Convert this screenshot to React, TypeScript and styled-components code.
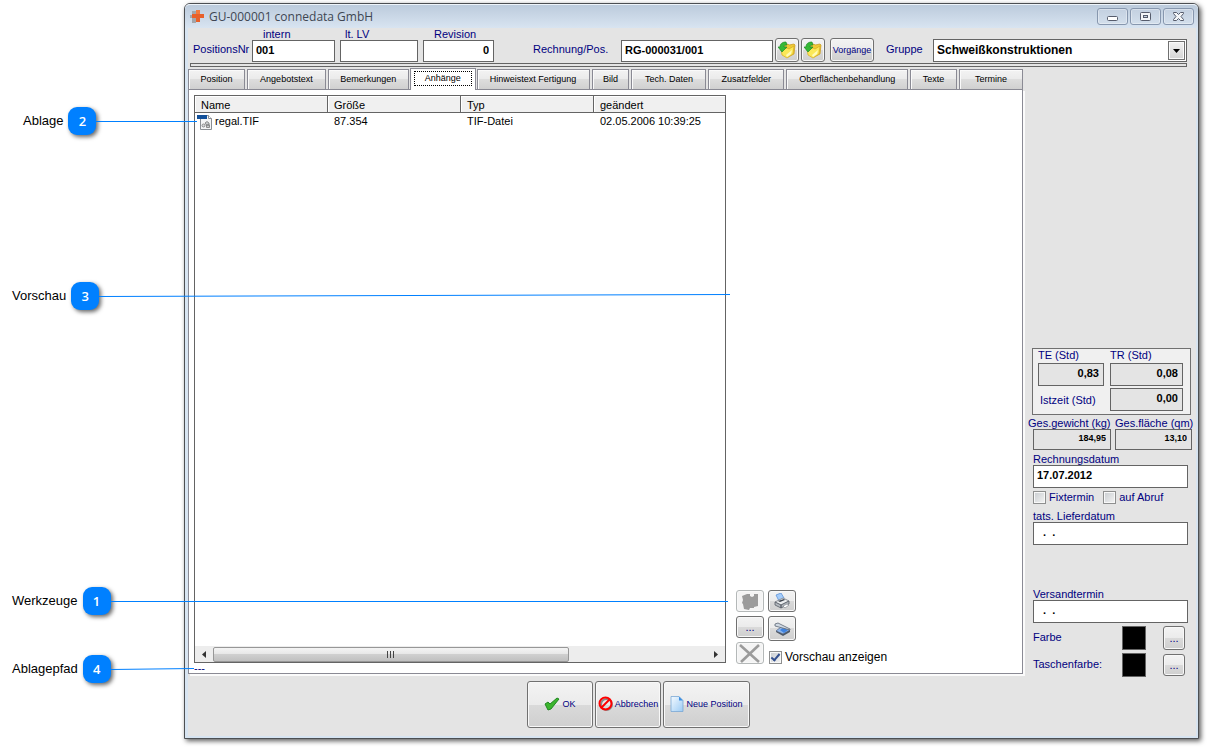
import React from 'react';
import styled, { createGlobalStyle, css } from 'styled-components';

const NAVY = '#000080';
const EDGE = '#646464';
const ACCENT = '#0080ff';

const GlobalStyle = createGlobalStyle`
  *, *::before, *::after { box-sizing: border-box; }
  body {
    margin: 0;
    background: #fff;
    color: #000;
    font-family: "Liberation Sans", Arial, sans-serif;
    font-size: 11px;
  }
  button, input, select { font-family: inherit; margin: 0; }
`;

/* ---------- page and window frame ---------- */

const Page = styled.div`
  position: relative;
  display: flex;
  min-height: 100vh;
  padding: 3px 8px 8px 184px;
`;

const Window = styled.main`
  flex: 1;
  min-width: 0;
  display: flex;
  flex-direction: column;
  border: 1px solid #4c4f52;
  border-radius: 6px 6px 0 0;
  background: #d7e4f1;
  box-shadow: 2px 2px 5px rgba(0, 0, 0, 0.65);
`;

const TitleBar = styled.header`
  display: flex;
  align-items: center;
  height: 24px;
  padding: 0 4px 0 5px;
  border-top: 1px solid #eef4fa;
  border-radius: 5px 5px 0 0;
  background: linear-gradient(#bccbdc, #d8e4f1);
`;

const Title = styled.h1`
  flex: 1;
  margin: 0 0 0 4px;
  font: 400 12px/20px "Open Sans", "Noto Sans", sans-serif;
  color: #3e4652;
`;

const CaptionButtons = styled.div`
  display: flex;
  gap: 2px;
`;

const CaptionButton = styled.button`
  display: flex;
  align-items: center;
  justify-content: center;
  width: 31px;
  height: 17px;
  padding: 0;
  border: 1px solid #8797ae;
  border-radius: 3px;
  background: linear-gradient(#c3d0e0, #d3dfec);
  box-shadow: inset 0 0 0 1px rgba(255, 255, 255, 0.35);
`;

const Client = styled.div`
  flex: 1;
  display: flex;
  flex-direction: column;
  margin: 0 2px 2px 3px;
  background: #e4e4e4;
`;

/* ---------- controls ---------- */

const FieldLabel = styled.label<{ $indent?: number }>`
  display: block;
  padding-left: ${p => p.$indent ?? 0}px;
  font-size: 11px;
  line-height: 12px;
  color: ${NAVY};
  white-space: nowrap;
`;

const TextInput = styled.input<{ $right?: boolean }>`
  display: block;
  width: 100%;
  height: 22px;
  padding: 0 ${p => (p.$right ? 4 : 3)}px 2px;
  border: 1px solid ${EDGE};
  border-radius: 0;
  background: #fff;
  font-size: 11px;
  font-weight: 700;
  color: #000;
  text-align: ${p => (p.$right ? 'right' : 'left')};
  outline: none;
`;

const SideInput = styled(TextInput)<{ $small?: boolean }>`
  height: ${p => (p.$small ? 21 : 23)}px;
  padding-bottom: 3px;
  font-size: ${p => (p.$small ? 9 : 11)}px;
  &:read-only { background: #e4e4e4; }
`;

const buttonFace = css`
  border: 1px solid #707070;
  border-radius: 3px;
  background: linear-gradient(#f3f3f3, #ebebeb 50%, #dadada 50%, #cfcfcf);
  box-shadow: inset 0 0 0 1px #f8f8f8;
  color: ${NAVY};
`;

const PushButton = styled.button<{ $width: number; $height: number }>`
  ${buttonFace}
  display: flex;
  align-items: center;
  justify-content: center;
  flex: none;
  width: ${p => p.$width}px;
  height: ${p => p.$height}px;
  padding: 0;
  font-size: 9px;
  white-space: nowrap;
  &:disabled {
    border-color: #b4b8b8;
    background: #f4f4f4;
  }
`;

const DotsButton = styled(PushButton)`
  font-size: 11px;
`;

const CheckLabel = styled.label<{ $dark?: boolean }>`
  display: flex;
  align-items: center;
  gap: 3px;
  font-size: ${p => (p.$dark ? 12 : 11)}px;
  line-height: 14px;
  color: ${p => (p.$dark ? '#000' : NAVY)};
  white-space: nowrap;
`;

const CheckBox = styled.input.attrs({ type: 'checkbox' })`
  appearance: none;
  display: flex;
  align-items: center;
  justify-content: center;
  flex: none;
  width: 13px;
  height: 13px;
  border: 1px solid #8e8f8f;
  background: linear-gradient(135deg, #c8ccd0, #f4f4f4);
  box-shadow: inset 0 0 0 1px #f8f8f8;
  &:checked::after {
    content: '';
    width: 5px;
    height: 9px;
    margin-bottom: 2px;
    border: solid #33508f;
    border-width: 0 2px 2px 0;
    transform: rotate(40deg);
  }
`;

/* ---------- head of the form ---------- */

const FormHead = styled.div`
  display: flex;
  align-items: flex-end;
  height: 34px;
  padding: 0 9px 0 5px;
`;

const InlineLabel = styled.label<{ $width: number; $before?: number }>`
  flex: none;
  width: ${p => p.$width}px;
  margin-left: ${p => p.$before ?? 0}px;
  line-height: 25px;
  color: ${NAVY};
  white-space: nowrap;
`;

const HeadField = styled.div<{ $width: number }>`
  flex: none;
  width: ${p => p.$width}px;
`;

const HeadFields = styled.div`
  display: flex;
  align-items: flex-end;
  gap: 5px;
`;

const HeadButtons = styled.div`
  display: flex;
  gap: 2px;
  margin: 0 5px 0 2px;
`;

const SelectBox = styled.div`
  position: relative;
  flex: 1;
  min-width: 0;
`;

const Select = styled.select`
  appearance: none;
  display: block;
  width: 100%;
  height: 23px;
  padding: 0 24px 2px 3px;
  border: 1px solid ${EDGE};
  border-radius: 0;
  background: #fff;
  font-size: 12px;
  font-weight: 700;
  color: #000;
`;

const SelectArrow = styled.span`
  position: absolute;
  top: 2px;
  right: 2px;
  bottom: 2px;
  width: 17px;
  display: flex;
  align-items: center;
  justify-content: center;
  border: 1px solid #707070;
  background: linear-gradient(#f2f2f2, #d4d4d4);
  box-shadow: inset 0 0 0 1px #fafafa;
  pointer-events: none;
`;

const Rule = styled.div`
  height: 4px;
  margin: 1px 9px 0 2px;
  border: 1px solid ${EDGE};
`;

/* ---------- tabs and panel ---------- */

const Body = styled.div`
  flex: 1;
  display: flex;
`;

const Main = styled.div`
  flex: 1;
  min-width: 0;
  display: flex;
  flex-direction: column;
`;

const TabList = styled.div`
  display: flex;
  align-items: flex-end;
  gap: 2px;
  height: 22px;
`;

const Tab = styled.button<{ $share: number; $active?: boolean }>`
  flex: ${p => p.$share} 1 0;
  min-width: 0;
  height: 20px;
  padding: 0 0 1px;
  border: 1px solid #8a8a94;
  border-bottom: 0;
  background: linear-gradient(#f3f3f3, #ebebeb 45%, #dddddd 50%, #d0d0d0);
  box-shadow: inset 1px 1px 0 #fafafa;
  font-size: 9px;
  color: #000;
  white-space: nowrap;
  ${p => p.$active && css`
    position: relative;
    height: 22px;
    margin: 0 -1px -1px;
    padding: 2px 3px 4px;
    background: #fff;
  `}
`;

const FocusFrame = styled.span`
  display: block;
  height: 15px;
  border: 1px dotted #000;
  line-height: 13px;
`;

const Panel = styled.section`
  flex: 1;
  display: grid;
  grid-template-columns: minmax(0, 532fr) minmax(0, 296fr);
  margin-bottom: 4px;
  padding: 5px 0 0 5px;
  border: 1px solid #8a8a94;
  background: #fff;
  box-shadow: 2px 2px 0 #fbfbfb;
`;

const ListColumn = styled.div`
  display: flex;
  flex-direction: column;
`;

const FileList = styled.div`
  flex: 1;
  display: flex;
  flex-direction: column;
  border: 1px solid ${EDGE};
  background: #fff;
`;

const FileTable = styled.table`
  width: 100%;
  table-layout: fixed;
  border-collapse: separate;
  border-spacing: 0;
  th {
    height: 17px;
    padding: 1px 6px 0;
    border-right: 1px solid ${EDGE};
    border-bottom: 1px solid ${EDGE};
    background: #f0f0f0;
    box-shadow: inset 1px 1px 0 #fff;
    font-weight: 400;
    line-height: 14px;
    text-align: left;
  }
  th:not(:last-child) { width: 133px; }
  th:last-child { border-right: 0; }
  td {
    height: 17px;
    padding: 0 6px;
    line-height: 17px;
    white-space: nowrap;
  }
  td:first-child { padding-left: 2px; }
`;

const FileName = styled.span`
  display: flex;
  align-items: center;
  gap: 2px;
`;

const ScrollBar = styled.div`
  display: flex;
  align-items: center;
  height: 16px;
  margin-top: auto;
  background: #ededed;
`;

const ScrollArrow = styled.button`
  display: flex;
  align-items: center;
  justify-content: center;
  flex: none;
  width: 18px;
  height: 16px;
  padding: 0;
  border: 0;
  background: none;
`;

const ScrollTrack = styled.div`
  flex: 1;
`;

const ScrollThumb = styled.div`
  display: flex;
  align-items: center;
  justify-content: center;
  gap: 2px;
  width: 72%;
  height: 15px;
  border: 1px solid #979797;
  border-radius: 2px;
  background: linear-gradient(#f4f4f4, #e6e6e6 50%, #cfcfcf 50%, #c0c0c0);
`;

const GripLine = styled.span`
  width: 1px;
  height: 7px;
  background: #444;
`;

const PathLine = styled.div`
  height: 10px;
  line-height: 10px;
  color: ${NAVY};
`;

const Preview = styled.div`
  display: flex;
  align-items: flex-end;
  padding: 0 10px 9px;
`;

const Tools = styled.div`
  display: flex;
  gap: 4px;
`;

const ToolColumn = styled.div`
  display: flex;
  flex-direction: column;
  gap: 4px;
`;

const ToolCheck = styled.div`
  padding: 5px 0 0 1px;
`;

/* ---------- side column ---------- */

const Side = styled.aside`
  flex: none;
  width: 173px;
  display: flex;
  flex-direction: column;
  justify-content: flex-end;
  padding: 0 8px 1px 10px;
`;

const TimeBox = styled.div`
  display: grid;
  grid-template-columns: 66px 73px;
  column-gap: 6px;
  row-gap: 2px;
  align-items: center;
  margin: 0 -3px 0 -1px;
  padding: 0 5px 3px;
  border: 1px solid #707070;
  background: #f0f0f0;
`;

const Pair = styled.div`
  display: grid;
  grid-template-columns: 78px 77px;
  gap: 4px;
  margin: 2px -4px 0 0;
`;

const OverhangLabel = styled(FieldLabel)<{ $pull?: boolean }>`
  margin-left: ${p => (p.$pull ? -5 : 0)}px;
`;

const SideField = styled.div<{ $before: number }>`
  margin-top: ${p => p.$before}px;
`;

const Checks = styled.div`
  display: flex;
  gap: 9px;
  margin-top: 2px;
`;

const ColourRow = styled.div`
  display: flex;
  align-items: center;
  margin-top: 3px;
  padding-right: 3px;
`;

const ColourName = styled.span`
  flex: 1;
  color: ${NAVY};
  padding-bottom: 3px;
`;

const Swatch = styled.span`
  width: 24px;
  height: 24px;
  margin-right: 17px;
  border: 1px solid ${EDGE};
  background: #000;
`;

const Footer = styled.footer`
  display: flex;
  gap: 2px;
  padding: 3px 339px 8px;
`;

const FooterButton = styled(PushButton)`
  gap: 2px;
  padding-bottom: 2px;
`;

/* ---------- callouts laid over the window ---------- */

const CalloutBox = styled.div<{ $x: number; $y: number }>`
  position: absolute;
  left: ${p => p.$x}px;
  top: ${p => p.$y}px;
  display: flex;
  align-items: center;
  pointer-events: none;
`;

const CalloutText = styled.span`
  font-size: 13px;
  line-height: 28px;
`;

const Badge = styled.span`
  width: 28px;
  height: 28px;
  margin-left: 5px;
  border-radius: 9px;
  background: ${ACCENT};
  box-shadow: 2px 2px 4px rgba(0, 0, 0, 0.6);
  font: 600 13px/28px "Open Sans", "Noto Sans", sans-serif;
  color: #fff;
  text-align: center;
`;

/* ---------- drawings ---------- */

const AppIcon = () => (
  <svg width="15" height="15" viewBox="0 0 15 15" aria-hidden="true">
    <path d="M2 2h4v3H2zM2 9h4v5H2zM0 6h3v3H0z" fill="#a3a6ab" />
    <path d="M6 1h4v4h4v4h-4v4H6V9H2V5h4z" fill="#e8602a" />
    <path d="M6 1h4v4H6z" fill="#f27a3e" />
  </svg>
);

const MinIcon = () => (
  <svg width="12" height="10" viewBox="0 0 12 10" aria-hidden="true">
    <rect x=".5" y="4.500" width="10" height="4" rx="1" fill="#fff" stroke="#565c6c" />
  </svg>
);

const MaxIcon = () => (
  <svg width="12" height="10" viewBox="0 0 12 10" aria-hidden="true">
    <rect x=".5" y=".5" width="10" height="8" rx="1" fill="#f4f6f8" stroke="#565c6c" />
    <rect x="3.500" y="3.500" width="4" height="2" fill="#c8d4e2" stroke="#565c6c" />
  </svg>
);

const CloseIcon = () => (
  <svg width="13" height="11" viewBox="0 0 13 11" aria-hidden="true">
    <path d="M1.500 1.500h3l2 2 2-2h3v1l-2.500 3 2.500 3v1h-3l-2-2-2 2h-3v-1l2.500-3-2.500-3z" fill="#f4f6f8" stroke="#565c6c" />
  </svg>
);

const FolderIcon = () => (
  <svg width="18" height="18" viewBox="0 0 18 18" aria-hidden="true">
    <path d="M7 4l3-1 1 1 5-1 1 1-1 9-6 3-4-3z" fill="#efca35" stroke="#c9981a" strokeWidth=".7" />
    <path d="M3 8l6-1 2 1 5-3-1 8-6 4-5-3z" fill="#fbe858" stroke="#d6ab22" strokeWidth=".7" />
    <path d="M8 14l6-5-1 4-4 3z" fill="#fffab8" />
    <path d="M8 1C4 1 2 3 2 6H0l4 5 5-5H6c0-2 1-2 3-2z" fill="#35b935" stroke="#1e8a26" strokeWidth=".7" />
  </svg>
);

const ArrowDown = () => (
  <svg width="7" height="4" viewBox="0 0 7 4" aria-hidden="true"><path d="M0 0h7L3.500 4z" /></svg>
);

const ArrowSide = ({ right }: { right?: boolean }) => (
  <svg width="4" height="7" viewBox="0 0 4 7" aria-hidden="true">
    <path d={right ? 'M0 0v7l4-3.500z' : 'M4 0v7L0 3.500z'} fill="#333" />
  </svg>
);

const FileIcon = () => (
  <svg width="16" height="16" viewBox="0 0 16 16" aria-hidden="true">
    <path d="M3.500 1.500h8l3 3v11h-11z" fill="#f4f5f6" stroke="#8b8f94" />
    <path d="M11.500 1.500v3h3" fill="#fff" stroke="#8b8f94" />
    <path d="M0 1h10v4H0z" fill="#12509a" />
    <circle cx="6.500" cy="11.500" r="1.500" fill="#d8dadc" stroke="#777" strokeWidth=".8" />
    <path d="M8 9l2-1.500L12 9v2H9.500zM9.500 11h3v2.500h-3z" fill="#c9ccce" stroke="#777" strokeWidth=".8" />
  </svg>
);

const StampIcon = () => (
  <svg width="18" height="17" viewBox="0 0 18 17" aria-hidden="true">
    <path d="M1 3l5-2h3v2l2 1 2-1V1h4v12l-4 1v1H9l-1 2-5-1-1-5-1-1 1-3z" fill="#9b9b9b" />
  </svg>
);

const PrinterIcon = () => (
  <svg width="16" height="16" viewBox="0 0 16 16" aria-hidden="true">
    <path d="M2 2l5-2 3 5-5 3z" fill="#a4ccfa" stroke="#5e93d8" strokeWidth=".8" />
    <path d="M1 9l8-4 6 3-8 4z" fill="#eceef0" stroke="#777c84" strokeWidth=".8" />
    <path d="M1 9v3l6 3v-3zM7 12v3l8-4V8z" fill="#b4b9bf" stroke="#565c65" strokeWidth=".8" />
    <path d="M4 8l6-2 1 1-5 2z" fill="#3d434c" />
    <path d="M9 13l4-2 2 1-4 3z" fill="#fff" stroke="#777c84" strokeWidth=".6" />
  </svg>
);

const ScannerIcon = () => (
  <svg width="17" height="14" viewBox="0 0 17 14" aria-hidden="true">
    <path d="M2 9l5-4 9 3-7 4z" fill="#8fb6ea" stroke="#5a6c8c" strokeWidth=".8" />
    <path d="M2 9v1l7 4v-2zM9 12v2l7-4V8z" fill="#4d5968" />
    <path d="M6 8l3-2 5 2-4 3z" fill="#3f83e0" />
    <path d="M1 2l3-1 12 6v1L1 4z" fill="#cfd8e2" stroke="#5d6775" strokeWidth=".8" />
  </svg>
);

const CrossIcon = () => (
  <svg width="22" height="19" viewBox="0 0 22 19" aria-hidden="true">
    <path d="M1 1l19 17M20 1L2 18" stroke="#9b9b9b" strokeWidth="2.600" />
  </svg>
);

const CheckIcon = () => (
  <svg width="16" height="14" viewBox="0 0 16 14" aria-hidden="true">
    <path d="M1 7l3-2 2 2 7-6 2 1-8 10-3 1z" fill="#3cb52e" stroke="#16801a" strokeWidth=".9" />
  </svg>
);

const ForbidIcon = () => (
  <svg width="15" height="15" viewBox="0 0 15 15" aria-hidden="true">
    <circle cx="8.500" cy="8.500" r="5.500" fill="none" stroke="#8a8a8a" strokeWidth="2" />
    <circle cx="7.500" cy="7.500" r="6" fill="none" stroke="#f00" strokeWidth="2" />
    <path d="M3.500 11.500l8-8" stroke="#f00" strokeWidth="2" />
  </svg>
);

const PageIcon = () => (
  <svg width="14" height="16" viewBox="0 0 14 16" aria-hidden="true">
    <defs>
      <linearGradient id="sheet" x1="0" y1="0" x2="1" y2="1">
        <stop offset="0" stopColor="#f4faff" />
        <stop offset="1" stopColor="#9ccbf4" />
      </linearGradient>
    </defs>
    <path d="M1 .5h8l4 4v11H1z" fill="url(#sheet)" stroke="#7aa7d4" strokeWidth=".8" />
    <path d="M9 .5v4h4z" fill="#3f8fe0" />
  </svg>
);

/* ---------- data ---------- */

const TABS = [
  { name: 'Position', share: 55 },
  { name: 'Angebotstext', share: 77 },
  { name: 'Bemerkungen', share: 79 },
  { name: 'Anhänge', share: 58, active: true },
  { name: 'Hinweistext Fertigung', share: 111 },
  { name: 'Bild', share: 36 },
  { name: 'Tech. Daten', share: 73 },
  { name: 'Zusatzfelder', share: 74 },
  { name: 'Oberflächenbehandlung', share: 120 },
  { name: 'Texte', share: 45 },
  { name: 'Termine', share: 62 },
];

const CALLOUTS = [
  { no: 2, text: 'Ablage', x: 23, y: 107, reach: 101, rise: 0 },
  { no: 3, text: 'Vorschau', x: 12, y: 282, reach: 631, rise: 2 },
  { no: 1, text: 'Werkzeuge', x: 12, y: 587, reach: 617, rise: 0 },
  { no: 4, text: 'Ablagepfad', x: 12, y: 655, reach: 83, rise: 1 },
];

const Callout = ({ no, text, x, y, reach, rise }: (typeof CALLOUTS)[number]) => (
  <CalloutBox $x={x} $y={y}>
    <CalloutText>{text}</CalloutText>
    <Badge>{no}</Badge>
    <svg width={reach} height="6" viewBox={`0 0 ${reach} 6`} aria-hidden="true">
      <path d={`M0 3.500L${reach} ${3.5 - rise}`} stroke={ACCENT} />
    </svg>
  </CalloutBox>
);

export default function App() {
  return (
    <Page>
      <GlobalStyle />
      <Window>
        <TitleBar>
          <AppIcon />
          <Title>GU-000001 connedata GmbH</Title>
          <CaptionButtons>
            <CaptionButton aria-label="Minimieren"><MinIcon /></CaptionButton>
            <CaptionButton aria-label="Maximieren"><MaxIcon /></CaptionButton>
            <CaptionButton aria-label="Schließen"><CloseIcon /></CaptionButton>
          </CaptionButtons>
        </TitleBar>
        <Client>
          <FormHead>
            <InlineLabel htmlFor="intern" $width={59}>PositionsNr</InlineLabel>
            <HeadFields>
              <HeadField $width={83}>
                <FieldLabel htmlFor="intern" $indent={11}>intern</FieldLabel>
                <TextInput id="intern" defaultValue="001" />
              </HeadField>
              <HeadField $width={78}>
                <FieldLabel htmlFor="lv" $indent={5}>lt. LV</FieldLabel>
                <TextInput id="lv" />
              </HeadField>
              <HeadField $width={71}>
                <FieldLabel htmlFor="revision" $indent={11}>Revision</FieldLabel>
                <TextInput id="revision" defaultValue="0" $right />
              </HeadField>
            </HeadFields>
            <InlineLabel htmlFor="rechnung" $width={88} $before={39}>Rechnung/Pos.</InlineLabel>
            <HeadField $width={152}>
              <TextInput id="rechnung" defaultValue="RG-000031/001" />
            </HeadField>
            <HeadButtons>
              <PushButton $width={24} $height={24} aria-label="Rechnung öffnen"><FolderIcon /></PushButton>
              <PushButton $width={24} $height={24} aria-label="Position öffnen"><FolderIcon /></PushButton>
            </HeadButtons>
            <PushButton $width={44} $height={24}>Vorgänge</PushButton>
            <InlineLabel htmlFor="gruppe" $width={47} $before={12}>Gruppe</InlineLabel>
            <SelectBox>
              <Select id="gruppe"><option>Schweißkonstruktionen</option></Select>
              <SelectArrow><ArrowDown /></SelectArrow>
            </SelectBox>
          </FormHead>
          <Rule />
          <Body>
            <Main>
              <TabList role="tablist">
                {TABS.map(t => (
                  <Tab key={t.name} role="tab" aria-selected={!!t.active} $share={t.share} $active={t.active}>
                    {t.active ? <FocusFrame>{t.name}</FocusFrame> : t.name}
                  </Tab>
                ))}
              </TabList>
              <Panel>
                <ListColumn>
                  <FileList>
                    <FileTable>
                      <thead>
                        <tr><th>Name</th><th>Größe</th><th>Typ</th><th>geändert</th></tr>
                      </thead>
                      <tbody>
                        <tr>
                          <td><FileName><FileIcon />regal.TIF</FileName></td>
                          <td>87.354</td>
                          <td>TIF-Datei</td>
                          <td>02.05.2006 10:39:25</td>
                        </tr>
                      </tbody>
                    </FileTable>
                    <ScrollBar>
                      <ScrollArrow aria-label="Nach links"><ArrowSide /></ScrollArrow>
                      <ScrollTrack>
                        <ScrollThumb><GripLine /><GripLine /><GripLine /></ScrollThumb>
                      </ScrollTrack>
                      <ScrollArrow aria-label="Nach rechts"><ArrowSide right /></ScrollArrow>
                    </ScrollBar>
                  </FileList>
                  <PathLine>---</PathLine>
                </ListColumn>
                <Preview>
                  <Tools>
                    <ToolColumn>
                      <PushButton $width={28} $height={22} disabled aria-label="Ablegen"><StampIcon /></PushButton>
                      <DotsButton $width={28} $height={22} aria-label="Datei wählen">...</DotsButton>
                      <PushButton $width={28} $height={22} disabled aria-label="Löschen"><CrossIcon /></PushButton>
                    </ToolColumn>
                    <ToolColumn>
                      <PushButton $width={28} $height={22} aria-label="Drucken"><PrinterIcon /></PushButton>
                      <PushButton $width={28} $height={25} aria-label="Scannen"><ScannerIcon /></PushButton>
                      <ToolCheck>
                        <CheckLabel $dark><CheckBox defaultChecked />Vorschau anzeigen</CheckLabel>
                      </ToolCheck>
                    </ToolColumn>
                  </Tools>
                </Preview>
              </Panel>
            </Main>
            <Side>
              <TimeBox>
                <FieldLabel htmlFor="te">TE (Std)</FieldLabel>
                <FieldLabel htmlFor="tr">TR (Std)</FieldLabel>
                <SideInput id="te" defaultValue="0,83" readOnly $right />
                <SideInput id="tr" defaultValue="0,08" readOnly $right />
                <FieldLabel htmlFor="ist" $indent={2}>Istzeit (Std)</FieldLabel>
                <SideInput id="ist" defaultValue="0,00" readOnly $right />
              </TimeBox>
              <Pair>
                <div>
                  <OverhangLabel htmlFor="gewicht" $pull>Ges.gewicht (kg)</OverhangLabel>
                  <SideInput id="gewicht" defaultValue="184,95" readOnly $right $small />
                </div>
                <div>
                  <OverhangLabel htmlFor="flaeche">Ges.fläche (qm)</OverhangLabel>
                  <SideInput id="flaeche" defaultValue="13,10" readOnly $right $small />
                </div>
              </Pair>
              <SideField $before={3}>
                <FieldLabel htmlFor="rdatum">Rechnungsdatum</FieldLabel>
                <SideInput id="rdatum" defaultValue="17.07.2012" />
              </SideField>
              <Checks>
                <CheckLabel><CheckBox />Fixtermin</CheckLabel>
                <CheckLabel><CheckBox />auf Abruf</CheckLabel>
              </Checks>
              <SideField $before={6}>
                <FieldLabel htmlFor="lieferdatum">tats. Lieferdatum</FieldLabel>
                <SideInput id="lieferdatum" defaultValue="  .  ." />
              </SideField>
              <SideField $before={43}>
                <FieldLabel htmlFor="versand">Versandtermin</FieldLabel>
                <SideInput id="versand" defaultValue="  .  ." />
              </SideField>
              <ColourRow>
                <ColourName>Farbe</ColourName>
                <Swatch />
                <DotsButton $width={22} $height={24} aria-label="Farbe wählen">...</DotsButton>
              </ColourRow>
              <ColourRow>
                <ColourName>Taschenfarbe:</ColourName>
                <Swatch />
                <DotsButton $width={22} $height={22} aria-label="Taschenfarbe wählen">...</DotsButton>
              </ColourRow>
            </Side>
          </Body>
          <Footer>
            <FooterButton $width={66} $height={47}><CheckIcon />OK</FooterButton>
            <FooterButton $width={66} $height={47}><ForbidIcon />Abbrechen</FooterButton>
            <FooterButton $width={87} $height={47}><PageIcon />Neue Position</FooterButton>
          </Footer>
        </Client>
      </Window>
      {CALLOUTS.map(c => <Callout key={c.no} {...c} />)}
    </Page>
  );
}
